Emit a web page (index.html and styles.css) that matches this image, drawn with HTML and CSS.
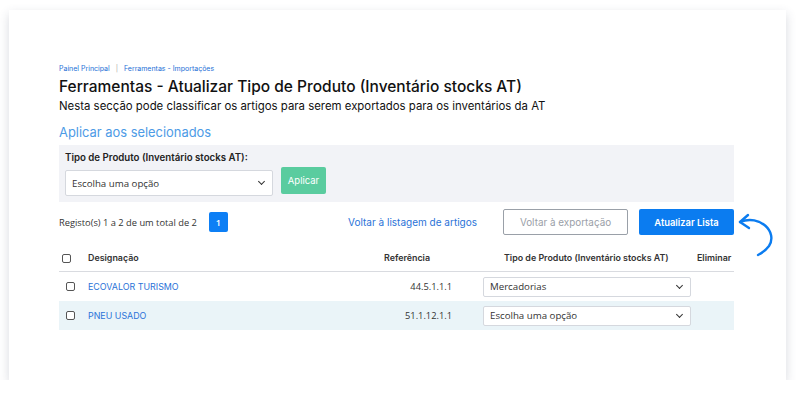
FILE: index.html
```html
<!DOCTYPE html>
<html lang="pt">
<head>
    <meta charset="UTF-8">
    <title>Ferramentas - Atualizar Tipo de Produto</title>
    <link rel="stylesheet" href="styles.css">
</head>
<body>
<div class="card">
    <nav class="breadcrumb">
        <a href="#">Painel Principal</a>
        <span class="sep">|</span>
        <a href="#">Ferramentas - Importações</a>
    </nav>
    <h1>Ferramentas - Atualizar Tipo de Produto (Inventário stocks AT)</h1>
    <p class="lead">Nesta secção pode classificar os artigos para serem exportados para os inventários da AT</p>

    <h2>Aplicar aos selecionados</h2>
    <section class="apply-box">
        <label>Tipo de Produto (Inventário stocks AT):</label>
        <div class="apply-row">
            <div class="select big"><span>Escolha uma opção</span><i class="chev"></i></div>
            <button class="btn-green">Aplicar</button>
        </div>
    </section>

    <div class="toolbar">
        <span class="count">Registo(s) 1 a 2 de um total de 2</span>
        <span class="page">1</span>
        <a href="#" class="back-link">Voltar à listagem de artigos</a>
        <button class="btn-outline">Voltar à exportação</button>
        <button class="btn-blue">Atualizar Lista</button>
        <svg class="arrow" width="44" height="52" viewBox="0 0 44 52">
            <path d="M4 12 C 24 4, 42 22, 33 36 C 30 40, 26 43, 22 45" fill="none" stroke="#0b7cf0" stroke-width="2.4" stroke-linecap="round"/>
            <path d="M12 5 L4 12 L13 18" fill="none" stroke="#0b7cf0" stroke-width="2.4" stroke-linecap="round" stroke-linejoin="round"/>
        </svg>
    </div>

    <table>
        <colgroup>
            <col class="c-chk">
            <col class="c-name">
            <col class="c-ref">
            <col class="c-type">
            <col class="c-del">
        </colgroup>
        <thead>
            <tr>
                <th class="c-chk"><span class="chk"></span></th>
                <th class="c-name">Designação</th>
                <th class="c-ref">Referência</th>
                <th class="c-type">Tipo de Produto (Inventário stocks AT)</th>
                <th class="c-del">Eliminar</th>
            </tr>
        </thead>
        <tbody>
            <tr>
                <td class="c-chk"><span class="chk"></span></td>
                <td class="c-name"><a href="#">ECOVALOR TURISMO</a></td>
                <td class="c-ref">44.5.1.1.1</td>
                <td class="c-type"><div class="select"><span>Mercadorias</span><i class="chev"></i></div></td>
                <td class="c-del"></td>
            </tr>
            <tr class="alt">
                <td class="c-chk"><span class="chk"></span></td>
                <td class="c-name"><a href="#">PNEU USADO</a></td>
                <td class="c-ref">51.1.12.1.1</td>
                <td class="c-type"><div class="select"><span>Escolha uma opção</span><i class="chev"></i></div></td>
                <td class="c-del"></td>
            </tr>
        </tbody>
    </table>
</div>
</body>
</html>
```

FILE: styles.css
```css
body {
    margin: 0;
    background: #fff;
    font-family: "Open Sans", sans-serif;
    color: #222;
}

.card {
    margin: 10px 14px 0 9px;
    height: 370px;
    box-sizing: border-box;
    padding: 53px 52px 0 50px;
    background: #fff;
    box-shadow: 0 4px 10px rgba(60, 70, 100, 0.2);
    position: relative;
}

.breadcrumb {
    font-family: Inter, sans-serif;
    font-size: 7px;
    line-height: 12px;
}

.breadcrumb a {
    color: #1d6fd6;
    text-decoration: none;
}

.breadcrumb .sep {
    color: #aaa;
    margin: 0 4px;
}

h1 {
    font-family: Inter, sans-serif;
    font-size: 15.5px;
    font-weight: 500;
    margin: 1px 0 0;
    line-height: 22px;
    color: #111;
}

.lead {
    font-family: Inter, sans-serif;
    font-size: 11.4px;
    margin: 0;
    line-height: 16px;
    color: #111;
}

h2 {
    font-family: Inter, sans-serif;
    font-size: 12.9px;
    font-weight: 400;
    color: #4d9be6;
    margin: 8px 0 0;
    line-height: 22px;
}

.apply-box {
    margin-top: 1px;
    background: #f2f3f7;
    padding: 6px 6px 8px;
    height: 57px;
    box-sizing: border-box;
}

.apply-box label {
    display: block;
    font-family: Inter, sans-serif;
    font-weight: 600;
    font-size: 9.7px;
    line-height: 13px;
    color: #222;
}

.apply-row {
    display: flex;
    align-items: flex-start;
    gap: 8px;
    margin-top: 3px;
}

.select {
    display: flex;
    align-items: center;
    justify-content: space-between;
    width: 208px;
    height: 20px;
    box-sizing: border-box;
    padding: 0 6px;
    border: 1px solid #d5d8de;
    border-radius: 2px;
    background: #fff;
    font-size: 9.7px;
    color: #333;
}

.select.big {
    height: 26px;
    margin-top: 3px;
}

.chev {
    width: 4px;
    height: 4px;
    border-right: 1.5px solid #333;
    border-bottom: 1.5px solid #333;
    transform: rotate(45deg);
    margin-top: -3px;
    margin-right: 2px;
}

.btn-green {
    font-family: Inter, sans-serif;
    font-size: 9.5px;
    color: #fff;
    background: #5acc9f;
    border: 0;
    border-radius: 2px;
    width: 45px;
    height: 27px;
}

.toolbar {
    display: flex;
    align-items: center;
    margin-top: 7px;
    height: 26px;
    position: relative;
    white-space: nowrap;
}

.toolbar > * {
    flex-shrink: 0;
}

.count {
    font-size: 9.3px;
    color: #333;
}

.page {
    margin-left: 12px;
    width: 19px;
    height: 20px;
    background: #0d7ff5;
    color: #fff;
    border-radius: 2px;
    font-size: 9px;
    font-weight: 600;
    display: flex;
    align-items: center;
    justify-content: center;
}

.back-link {
    font-family: Inter, sans-serif;
    margin-left: auto;
    font-size: 10px;
    color: #2a73d8;
    text-decoration: none;
}

.btn-outline {
    margin-left: 26px;
    width: 125px;
    height: 26px;
    background: #fff;
    border: 1px solid #9aa0a8;
    border-radius: 2px;
    color: #9aa0a8;
    font-family: Inter, sans-serif;
    font-size: 9.9px;
}

.btn-blue {
    margin-left: 11px;
    width: 95px;
    height: 26px;
    background: #0b7cf0;
    border: 0;
    border-radius: 2px;
    color: #fff;
    font-family: Inter, sans-serif;
    font-weight: 600;
    font-size: 9.4px;
}

.arrow {
    position: absolute;
    left: 677px;
    top: 1px;
}

table {
    width: 675px;
    border-collapse: collapse;
    margin-top: 17px;
    table-layout: fixed;
}

col.c-chk { width: 29px; }
col.c-name { width: 296px; }
col.c-ref { width: 94px; }
col.c-type { width: 217px; }
col.c-del { width: 39px; }

th {
    font-family: Inter, sans-serif;
    font-size: 8.9px;
    font-weight: 600;
    color: #333;
    height: 19px;
    padding: 0;
    text-align: left;
    border-bottom: 1.5px solid #d9dbe0;
    vertical-align: top;
    white-space: nowrap;
}

td {
    height: 29px;
    padding: 0;
    font-size: 9.3px;
    color: #333;
}

tr.alt td {
    background: #eaf4f8;
}

th.c-chk .chk { margin-left: 3px; margin-top: 2px; }
td.c-chk .chk { margin-left: 7px; }

.chk {
    display: block;
    width: 7px;
    height: 7px;
    border: 1px solid #555;
    border-radius: 2px;
    background: #fff;
}

td.c-ref { text-align: right; padding-right: 26px; }
th.c-type { padding-left: 26px; }
td.c-type { padding-left: 5px; }
th.c-del { padding-left: 2px; }

td.c-name a {
    font-family: Inter, sans-serif;
    color: #2a73d8;
    text-decoration: none;
    font-size: 8.9px;
}
```
